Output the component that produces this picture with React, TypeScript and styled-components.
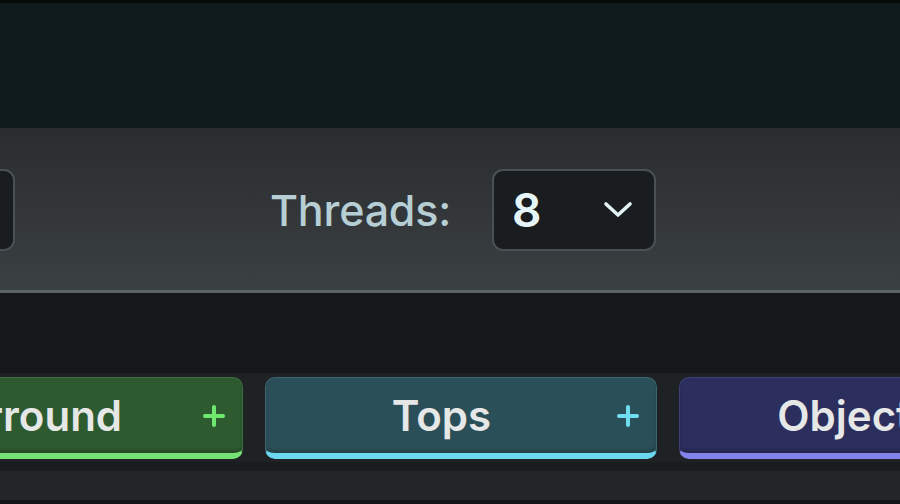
import React from "react";
import styled, { createGlobalStyle } from "styled-components";

const Global = createGlobalStyle`
  html, body { margin: 0; padding: 0; background: #0f1a1c; }
  body { font-family: Inter, "Noto Sans", "Liberation Sans", sans-serif; overflow: hidden; }
  * { box-sizing: border-box; }
`;

const Frame = styled.div`
  width: 900px;
  height: 504px;
  display: flex;
  flex-direction: column;
  border-top: 3px solid #070909;
  overflow: hidden;
`;

const Header = styled.div`
  height: 125px;
  flex: none;
  background: #0f1a1c;
`;

const Toolbar = styled.div`
  height: 165px;
  flex: none;
  display: flex;
  align-items: center;
  background: linear-gradient(180deg, #2a2d2f 0%, #33373a 55%, #3b4043 100%);
  border-bottom: 3px solid #5a6265;
  padding-top: 2px;
`;

const Field = styled.div<{ $offset?: number }>`
  display: flex;
  align-items: center;
  gap: 41px;
  margin-left: ${(p) => p.$offset ?? 0}px;
`;

const Label = styled.span`
  font-size: 43px;
  font-weight: 500;
  color: #b6ced4;
  letter-spacing: -0.2px;
`;

const Select = styled.div<{ $width: number }>`
  width: ${(p) => p.$width}px;
  height: 82px;
  border: 2px solid #4a5154;
  border-radius: 11px;
  background: #1a1d1f;
  display: flex;
  align-items: center;
  justify-content: space-between;
  padding: 0 21px 0 18px;
`;

const Value = styled.span`
  font-size: 46px;
  font-weight: 600;
  color: #e6f6f8;
`;

const Gap = styled.div`
  height: 80px;
  flex: none;
  background: #151718;
`;

const TabRow = styled.div`
  height: 89px;
  flex: none;
  background: #1f2225;
  display: flex;
  gap: 22px;
  padding-top: 4px;
  padding-bottom: 3px;
`;

const Tab = styled.div<{ $bg: string; $accent: string; $edge: string; $first?: boolean }>`
  flex: none;
  width: 392px;
  margin-left: ${(p) => (p.$first ? "-149px" : "0")};
  background: ${(p) => p.$bg};
  border: 1px solid ${(p) => p.$edge};
  border-bottom: 6px solid ${(p) => p.$accent};
  border-radius: 10px;
  display: flex;
  align-items: center;
  padding: 0 17px 0 0;
  box-shadow: inset 0 -3px 3px rgba(0, 0, 0, 0.18);
`;

const TabLabel = styled.span`
  flex: 1;
  text-align: center;
  font-size: 42px;
  font-weight: 600;
  color: #e6e7e7;
  white-space: nowrap;
`;

const Plus = styled.svg`
  flex: none;
  width: 22px;
  height: 22px;
`;

const Strip = styled.div`
  height: 9px;
  flex: none;
  background: #1a1d1f;
`;

const Footer = styled.div`
  flex: 1;
  background: #222629;
  border-bottom: 4px solid #121415;
`;

const Chevron = () => (
  <svg width="30" height="18" viewBox="0 0 30 18" fill="none">
    <path d="M3 3 L15 14 L27 3" stroke="#e2f2f6" strokeWidth="3.6" strokeLinecap="round" strokeLinejoin="round" />
  </svg>
);

const PlusIcon = ({ color }: { color: string }) => (
  <Plus viewBox="0 0 22 22" fill="none">
    <path d="M11 2 V20 M2 11 H20" stroke={color} strokeWidth="4" strokeLinecap="round" />
  </Plus>
);

const tabs = [
  { label: "Surround", bg: "#2e5a30", edge: "#3c7040", accent: "#74e274", plus: "#6ee86e" },
  { label: "Tops", bg: "#2b4f58", edge: "#3a6670", accent: "#6ad8ee", plus: "#6fdcf0" },
  { label: "Objects", bg: "#2c2e5e", edge: "#3c3f78", accent: "#8284ea", plus: "#9a9cf5" },
];

export default function App() {
  return (
    <>
      <Global />
      <Frame>
        <Header />
        <Toolbar>
          <Field $offset={-150}>
            <Select $width={165} />
          </Field>
          <Field $offset={255}>
            <Label>Threads:</Label>
            <Select $width={164}>
              <Value>8</Value>
              <Chevron />
            </Select>
          </Field>
        </Toolbar>
        <Gap />
        <TabRow>
          {tabs.map((t, i) => (
            <Tab key={t.label} $bg={t.bg} $accent={t.accent} $edge={t.edge} $first={i === 0}>
              <TabLabel>{t.label}</TabLabel>
              <PlusIcon color={t.plus} />
            </Tab>
          ))}
        </TabRow>
        <Strip />
        <Footer />
      </Frame>
    </>
  );
}
